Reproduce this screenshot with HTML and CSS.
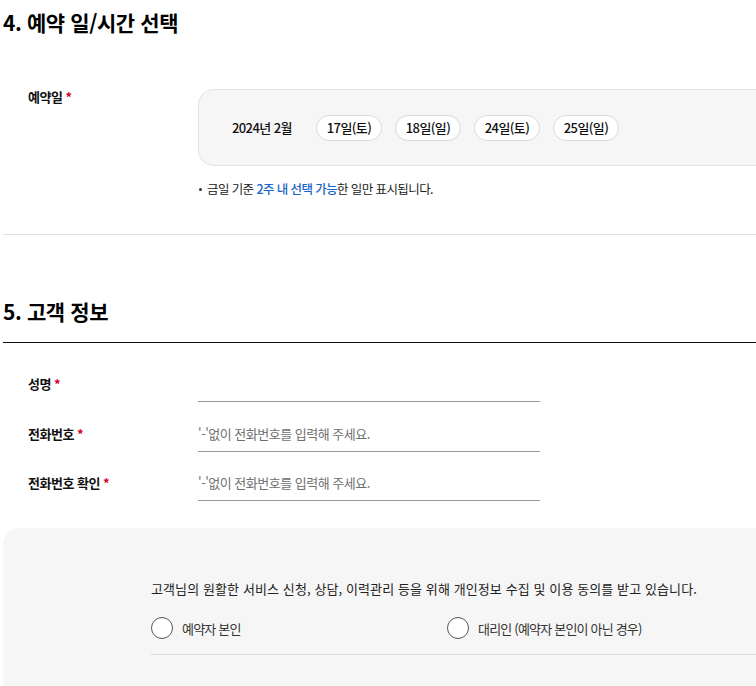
FILE: index.html
```html
<!DOCTYPE html>
<html lang="ko">
<head>
    <meta charset="UTF-8">
    <meta name="viewport" content="width=device-width, initial-scale=1.0">
    <title>예약</title>
    <link rel="stylesheet" href="styles.css">
</head>
<body>

<div class="page">
    <section class="step">
        <h2 class="step-title">4. 예약 일/시간 선택</h2>

        <div class="row row-top">
            <div class="label">예약일 <span class="req">*</span></div>
            <div class="field">
                <div class="date-box">
                    <span class="month">2024년 2월</span>
                    <button class="day">17일(토)</button>
                    <button class="day">18일(일)</button>
                    <button class="day">24일(토)</button>
                    <button class="day">25일(일)</button>
                </div>
                <p class="note">금일 기준 <em>2주 내 선택 가능</em>한 일만 표시됩니다.</p>
            </div>
        </div>
    </section>

    <section class="step step-customer">
        <h2 class="step-title line">5. 고객 정보</h2>

        <div class="form">
            <div class="row">
                <div class="label">성명 <span class="req">*</span></div>
                <div class="field"><input class="input" type="text"></div>
            </div>
            <div class="row">
                <div class="label">전화번호 <span class="req">*</span></div>
                <div class="field"><input class="input" type="text" placeholder="'-'없이 전화번호를 입력해 주세요."></div>
            </div>
            <div class="row">
                <div class="label">전화번호 확인 <span class="req">*</span></div>
                <div class="field"><input class="input" type="text" placeholder="'-'없이 전화번호를 입력해 주세요."></div>
            </div>
        </div>

        <div class="agree-box">
            <p class="agree-text">고객님의 원활한 서비스 신청, 상담, 이력관리 등을 위해 개인정보 수집 및 이용 동의를 받고 있습니다.</p>
            <div class="radios">
                <label class="radio"><input type="radio" name="who"><span class="circle"></span>예약자 본인</label>
                <label class="radio"><input type="radio" name="who"><span class="circle"></span>대리인 (예약자 본인이 아닌 경우)</label>
            </div>
        </div>
    </section>
</div>

</body>
</html>
```

FILE: styles.css
```css
body {
    margin: 0;
    overflow: hidden;
    font-family: "Noto Sans CJK KR", "Noto Sans", sans-serif;
    color: #111;
    background: #fff;
}
.page {
    width: 1100px;
    padding-left: 3px;
}
.step-title {
    margin: 0;
    padding-top: 8px;
    font-size: 21px;
    line-height: 28px;
    font-weight: 700;
    letter-spacing: -0.4px;
    color: #000;
}
.step {
    padding-bottom: 36px;
    border-bottom: 1px solid #dedede;
}
.step-customer {
    border-bottom: none;
    padding-bottom: 0;
    margin-top: 54px;
}
.step-title.line {
    padding-bottom: 17px;
    border-bottom: 1px solid #111;
}

.row {
    display: flex;
    align-items: center;
}
.row-top {
    align-items: flex-start;
    margin-top: 53px;
}
.label {
    width: 195px;
    box-sizing: border-box;
    padding-left: 25px;
    font-size: 13px;
    line-height: 16px;
    font-weight: 700;
    letter-spacing: -0.5px;
    color: #111;
}
.req {
    color: #d4002a;
    font-weight: 700;
}
.field {
    flex: 1;
}

.date-box {
    display: flex;
    align-items: center;
    height: 77px;
    box-sizing: border-box;
    padding-left: 33px;
    background: #f6f6f6;
    border: 1px solid #e4e4e4;
    border-right: none;
    border-radius: 16px 0 0 16px;
}
.month {
    width: 84px;
    font-size: 13px;
    font-weight: 500;
    letter-spacing: -0.6px;
    color: #111;
}
.day {
    width: 66px;
    height: 26px;
    margin-right: 13px;
    padding: 0;
    background: #fff;
    border: 1px solid #dadada;
    border-radius: 13px;
    font-family: inherit;
    font-size: 13px;
    font-weight: 500;
    letter-spacing: -0.6px;
    color: #111;
    cursor: pointer;
}
.note {
    position: relative;
    margin: 14px 0 0;
    padding-left: 9px;
    font-size: 12.5px;
    line-height: 18px;
    letter-spacing: -0.6px;
    color: #222;
}
.note::before {
    content: "";
    position: absolute;
    left: 1px;
    top: 8px;
    width: 3px;
    height: 3px;
    border-radius: 50%;
    background: #333;
}
.note em {
    font-style: normal;
    font-weight: 500;
    color: #1a66c8;
}

.form {
    padding-top: 23px;
}
.form .row + .row {
    margin-top: 13.5px;
}
.input {
    display: block;
    width: 342px;
    height: 36px;
    box-sizing: border-box;
    padding: 0;
    border: none;
    border-bottom: 1px solid #9a9a9a;
    background: transparent;
    font-family: inherit;
    font-size: 13px;
    letter-spacing: -0.5px;
    color: #111;
    outline: none;
}
.input::placeholder {
    color: #707070;
}

.agree-box {
    margin-top: 27px;
    padding: 52px 0 0 148px;
    height: 200px;
    background: #f6f6f6;
    border-radius: 16px 0 0 0;
}
.agree-text {
    margin: 0;
    font-size: 13px;
    line-height: 18px;
    letter-spacing: 0.1px;
    color: #222;
}
.radios {
    display: flex;
    margin-top: 18px;
    padding-bottom: 14px;
    border-bottom: 1px solid #dcdcdc;
}
.radio {
    display: flex;
    align-items: center;
    width: 296px;
    height: 24px;
    font-size: 13px;
    letter-spacing: -0.8px;
    color: #333;
    cursor: pointer;
}
.radio input {
    display: none;
}
.circle {
    width: 22px;
    height: 22px;
    margin-right: 9px;
    box-sizing: border-box;
    border: 1px solid #555;
    border-radius: 50%;
    background: #fff;
}
```
